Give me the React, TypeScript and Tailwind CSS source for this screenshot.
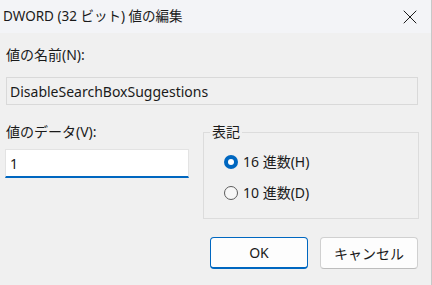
import { X } from "lucide-react";

const font = {
  fontFamily: '"Noto Sans", "Noto Sans CJK JP", sans-serif',
};

export default function App() {
  return (
    <div
      className="w-[432px] h-[285px] bg-[#f0f0f0] text-[#1a1a1a] border-r border-r-[#c8c8c8] flex flex-col overflow-hidden"
      style={font}
    >
      {/* title bar */}
      <div className="h-[33px] bg-[#f3f4f7] flex items-center justify-between pl-[3px] pr-[9px] shrink-0">
        <p className="text-[13.5px] leading-none">DWORD (32 ビット) 値の編集</p>
        <X size={24} strokeWidth={1} className="text-[#1a1a1a]" />
      </div>

      <div className="px-[6px] pt-[12px] flex flex-col">
        <p className="text-[14px] leading-[20px]">値の名前(N):</p>
        <div className="mt-[12px] h-[28px] w-[412px] border border-[#d9d9d9] bg-[#f0f0f0] flex items-center px-[3px]">
          <span className="text-[14px]">DisableSearchBoxSuggestions</span>
        </div>

        <div className="flex mt-[17px]">
          <div className="w-[184px] flex flex-col">
            <p className="text-[14px] leading-[20px]">値のデータ(V):</p>
            <div className="mt-[7px] h-[29px] w-[184px] -ml-px bg-white border border-[#e3e3e3] border-b-2 border-b-[#0067c0] flex items-center px-[4px]">
              <span className="text-[14px]">1</span>
            </div>
          </div>

          <div className="ml-[13px] w-[216px] mt-[10px] h-[87px] border border-[#dcdcdc] relative">
            <span className="absolute -top-[11px] left-[6px] px-[2px] bg-[#f0f0f0] text-[14px] leading-[20px]">
              表記
            </span>
            <div className="flex flex-col pl-[20px] pt-[19px] gap-[11px]">
              <label className="flex items-center gap-[5px] text-[14px] leading-[20px]">
                <span className="w-[14px] h-[14px] rounded-full bg-[#0067c0] flex items-center justify-center">
                  <span className="w-[6px] h-[6px] rounded-full bg-white" />
                </span>
                16 進数(H)
              </label>
              <label className="flex items-center gap-[5px] text-[14px] leading-[20px]">
                <span className="w-[14px] h-[14px] rounded-full border border-[#5c5c5c] bg-[#f7f7f7]" />
                10 進数(D)
              </label>
            </div>
          </div>
        </div>

        <div className="flex justify-end gap-[12px] mt-[18px] pr-[7px]">
          <button className="w-[98px] h-[32px] rounded-[4px] bg-[#fdfdfd] border border-[#0067c0] border-b-2 text-[14px]">
            OK
          </button>
          <button className="w-[98px] h-[32px] rounded-[4px] bg-[#fdfdfd] border border-[#d0d0d0] border-b-[#bdbdbd] text-[14px]">
            キャンセル
          </button>
        </div>
      </div>
    </div>
  );
}
